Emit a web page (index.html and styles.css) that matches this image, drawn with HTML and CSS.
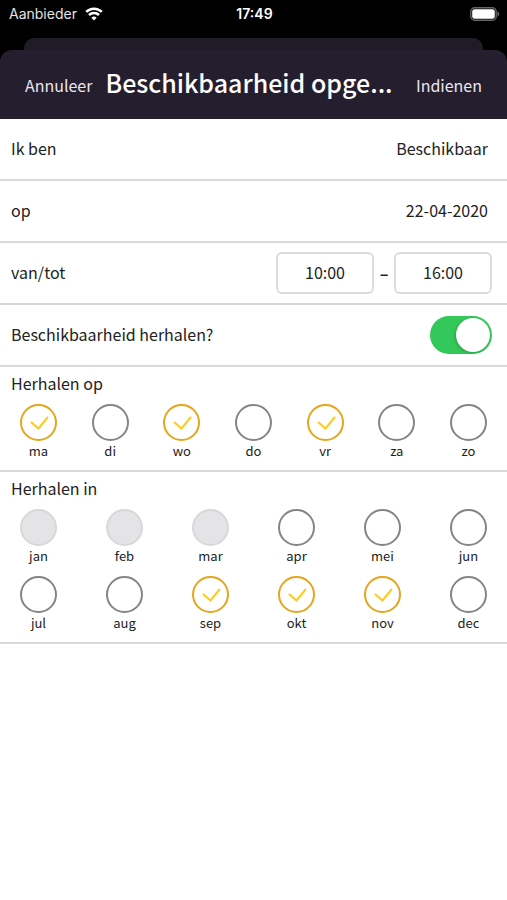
FILE: index.html
```html
<!DOCTYPE html>
<html lang="nl">
<head>
<meta charset="utf-8">
<meta name="viewport" content="width=device-width, initial-scale=1">
<title>Beschikbaarheid opgeven</title>
<link rel="stylesheet" href="styles.css">
</head>
<body>
<svg class="symbols" aria-hidden="true">
  <symbol id="check" viewBox="0 0 37 37"><path d="M11.5 18.5 L18.5 24.5 L27.5 13.5"/></symbol>
</svg>
<div class="status">
  <div class="carrier">Aanbieder
    <svg class="wifi" viewBox="0 0 18 14" aria-hidden="true">
      <path d="M1.2 4.9 A11.2 11.2 0 0 1 16.8 4.9"/>
      <path d="M4 8 A7.2 7.2 0 0 1 14 8"/>
      <path class="dot" d="M9 13.6 L6.3 10.8 A3.9 3.9 0 0 1 11.7 10.8 Z"/>
    </svg>
  </div>
  <div class="time">17:49</div>
  <svg class="battery" viewBox="0 0 30 14" aria-hidden="true">
    <rect class="shell" x="0.8" y="0.8" width="25.4" height="12.4" rx="3.8"/>
    <rect class="charge" x="2.2" y="2.2" width="22.6" height="9.6" rx="2.4"/>
    <path class="cap" d="M27.5 4.6 Q29.4 5.4 29.4 7 Q29.4 8.6 27.5 9.4 Z"/>
  </svg>
</div>
<div class="sheet-behind"></div>
<header class="nav">
  <button type="button">Annuleer</button>
  <h1>Beschikbaarheid opge...</h1>
  <button type="button">Indienen</button>
</header>
<main>
  <div class="row">
    <label for="state">Ik ben</label>
    <select id="state" class="value"><option>Beschikbaar</option></select>
  </div>
  <div class="row">
    <label for="date">op</label>
    <input id="date" class="value" type="text" value="22-04-2020">
  </div>
  <div class="row">
    <label for="from">van/tot</label>
    <div class="times">
      <input id="from" type="text" value="10:00">
      <span class="dash">–</span>
      <input type="text" value="16:00" aria-label="tot">
    </div>
  </div>
  <div class="row">
    <label for="repeat">Beschikbaarheid herhalen?</label>
    <input id="repeat" class="switch" type="checkbox" role="switch" checked>
  </div>
  <section>
    <h2>Herhalen op</h2>
    <div class="picks days">
      <label><input type="checkbox" checked><svg><use href="#check"/></svg><span>ma</span></label>
      <label><input type="checkbox"><svg><use href="#check"/></svg><span>di</span></label>
      <label><input type="checkbox" checked><svg><use href="#check"/></svg><span>wo</span></label>
      <label><input type="checkbox"><svg><use href="#check"/></svg><span>do</span></label>
      <label><input type="checkbox" checked><svg><use href="#check"/></svg><span>vr</span></label>
      <label><input type="checkbox"><svg><use href="#check"/></svg><span>za</span></label>
      <label><input type="checkbox"><svg><use href="#check"/></svg><span>zo</span></label>
    </div>
  </section>
  <section>
    <h2>Herhalen in</h2>
    <div class="picks months">
      <label><input type="checkbox" disabled><svg><use href="#check"/></svg><span>jan</span></label>
      <label><input type="checkbox" disabled><svg><use href="#check"/></svg><span>feb</span></label>
      <label><input type="checkbox" disabled><svg><use href="#check"/></svg><span>mar</span></label>
      <label><input type="checkbox"><svg><use href="#check"/></svg><span>apr</span></label>
      <label><input type="checkbox"><svg><use href="#check"/></svg><span>mei</span></label>
      <label><input type="checkbox"><svg><use href="#check"/></svg><span>jun</span></label>
      <label><input type="checkbox"><svg><use href="#check"/></svg><span>jul</span></label>
      <label><input type="checkbox"><svg><use href="#check"/></svg><span>aug</span></label>
      <label><input type="checkbox" checked><svg><use href="#check"/></svg><span>sep</span></label>
      <label><input type="checkbox" checked><svg><use href="#check"/></svg><span>okt</span></label>
      <label><input type="checkbox" checked><svg><use href="#check"/></svg><span>nov</span></label>
      <label><input type="checkbox"><svg><use href="#check"/></svg><span>dec</span></label>
    </div>
  </section>
</main>
</body>
</html>
```
FILE: styles.css
```css
* { box-sizing: border-box; }

body {
  margin: 0;
  min-height: 100vh;
  display: flex;
  flex-direction: column;
  background: #000;
  color: #222;
  font: 16px/24px "Noto Sans CJK SC", "Noto Sans", sans-serif;
}

button, input, select {
  margin: 0;
  padding: 0;
  border: 0;
  background: none;
  color: inherit;
  font: inherit;
  appearance: none;
}

.symbols { display: none; }

.status {
  display: grid;
  grid-template-columns: 1fr auto 1fr;
  align-items: center;
  padding: 4px 7px 0 9px;
  height: 24px;
  margin-bottom: 14px;
  color: #e4e4e4;
  font: 14px/20px Inter, sans-serif;
}
.carrier { display: flex; align-items: center; gap: 8px; }
.time { font-weight: 600; color: #fff; }
.wifi { width: 18px; height: 14px; fill: none; stroke: #fff; stroke-width: 2.6; }
.wifi .dot { fill: #fff; stroke: none; }
.battery { width: 30px; height: 14px; justify-self: end; }
.shell { fill: none; stroke: #666; stroke-width: 1.4; }
.charge { fill: #fff; }
.cap { fill: #666; }

.sheet-behind {
  height: 12px;
  margin: 0 24px;
  border-radius: 10px 10px 0 0;
  background: #201b26;
}

.nav {
  display: flex;
  align-items: center;
  gap: 13px;
  height: 69px;
  padding: 0 25px;
  border-radius: 12px 12px 0 0;
  background: #251e2e;
  color: #fff;
}
.nav button { color: #e9e6ee; }
.nav h1 { flex: 1; margin: 0; font-size: 25px; line-height: 36px; font-weight: 500; white-space: nowrap; padding-bottom: 6px; }

main { flex: 1; background: #fff; }

.row {
  display: flex;
  align-items: center;
  justify-content: space-between;
  height: 62px;
  padding: 0 15px 0 11px;
  border-bottom: 2px solid #d9d9d9;
}
.row label { padding-bottom: 2px; }
.value { width: 140px; height: 32px; padding: 0 4px 2px 0; text-align: right; text-align-last: right; }
.times { display: flex; align-items: center; gap: 5px; }
.times input {
  width: 98px;
  height: 42px;
  padding-bottom: 2px;
  border: 2px solid #dcdcdc;
  border-radius: 6px;
  text-align: center;
}
.dash { width: 10px; text-align: center; font-weight: 700; }

.switch {
  display: flex;
  justify-content: flex-end;
  width: 62px;
  height: 38px;
  padding: 2px;
  border-radius: 19px;
  background: #34c759;
}
.switch::before {
  content: "";
  width: 34px;
  height: 34px;
  border-radius: 50%;
  background: #fff;
  box-shadow: -1px 1px 3px rgba(0, 0, 0, .2);
}
.switch:not(:checked) { justify-content: flex-start; background: #dcdcdc; }

section { padding: 4px 20px 9px; border-bottom: 2px solid #d9d9d9; }
h2 { margin: 0 0 9px -9px; font-size: 16px; line-height: 24px; font-weight: 400; }

.picks { display: grid; justify-content: space-between; row-gap: 10px; }
.days { grid-template-columns: repeat(7, 37px); }
.months { grid-template-columns: repeat(6, 37px); }
.picks label { display: grid; grid-template-rows: 37px 20px; justify-items: center; font-size: 13px; line-height: 20px; }
.picks input, .picks svg { grid-area: 1 / 1; width: 37px; height: 37px; }
.picks input { border: 2px solid #858585; border-radius: 50%; }
.picks span { grid-area: 2 / 1; }
.picks svg { fill: none; stroke: #ffca1a; stroke-width: 2; stroke-linecap: round; visibility: hidden; pointer-events: none; }
.picks input:checked { border-color: #e6a51a; }
.picks input:checked + svg { visibility: visible; }
.picks input:disabled { border-color: #d8d8da; background: #e4e4e6; }
```
